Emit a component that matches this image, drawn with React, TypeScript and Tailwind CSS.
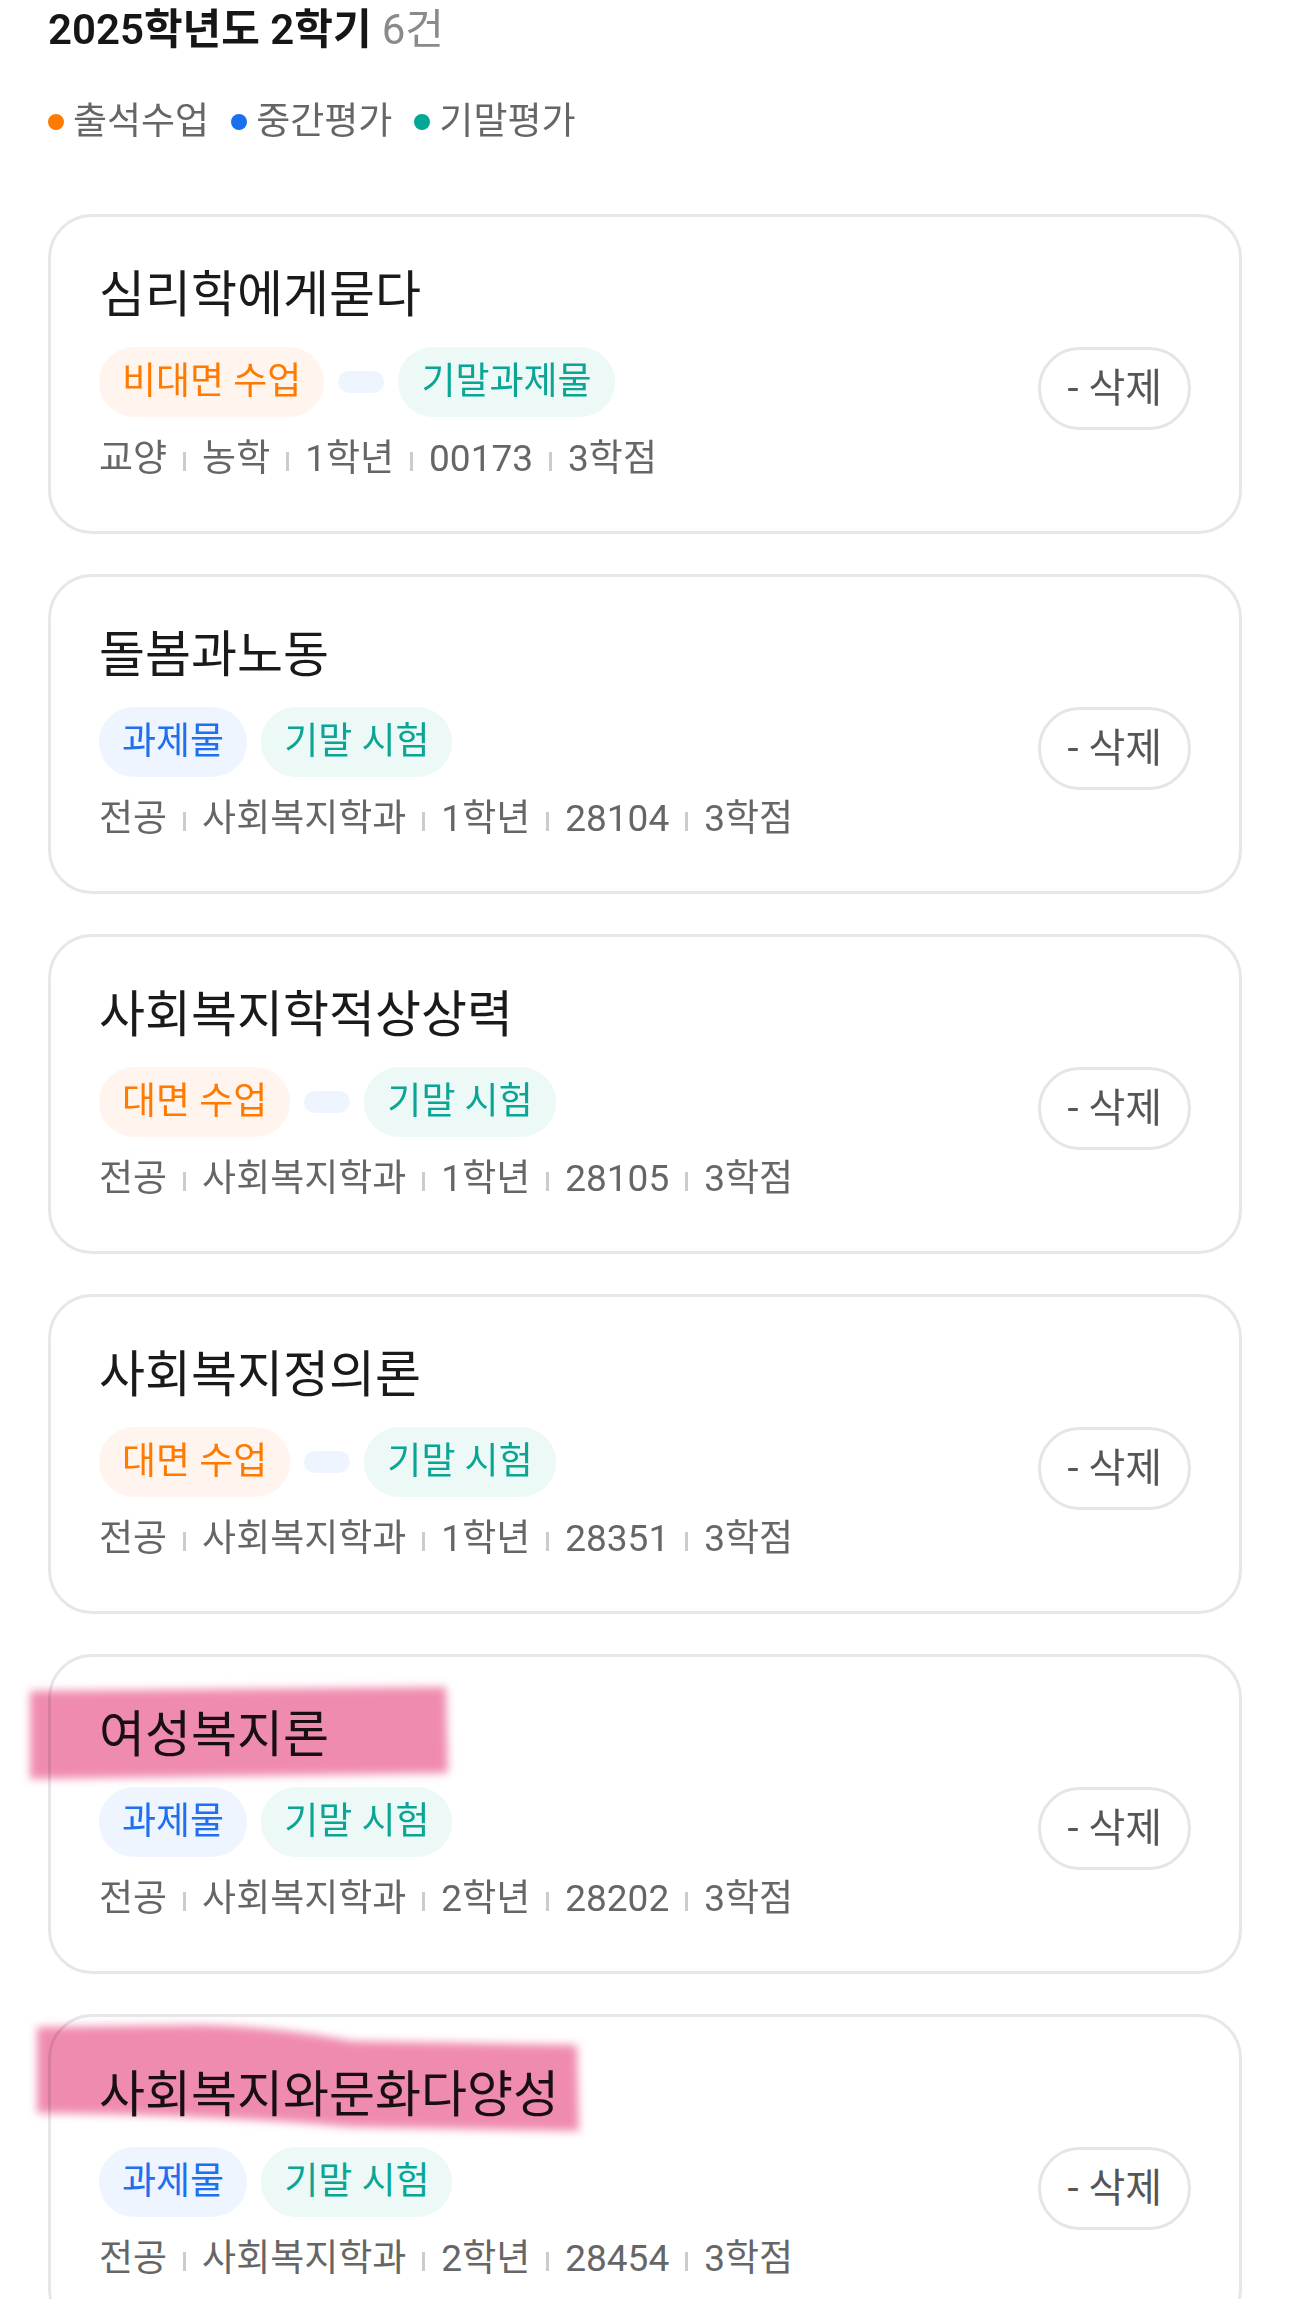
import React from 'react';

type TagKind = 'orange' | 'blue' | 'teal';

interface Tag {
  kind: TagKind;
  label: string;
}

interface Course {
  name: string;
  tags: Tag[];
  meta: string[];
  mark?: 'short' | 'long';
}

const tagStyles: Record<TagKind, string> = {
  orange: 'bg-[#fff5ee] text-[#ff7a00]',
  blue: 'bg-[#eff5ff] text-[#1f6fef]',
  teal: 'bg-[#edf9f6] text-[#0aa594]',
};

const courses: Course[] = [
  {
    name: '심리학에게묻다',
    tags: [
      { kind: 'orange', label: '비대면 수업' },
      { kind: 'blue', label: '' },
      { kind: 'teal', label: '기말과제물' },
    ],
    meta: ['교양', '농학', '1학년', '00173', '3학점'],
  },
  {
    name: '돌봄과노동',
    tags: [
      { kind: 'blue', label: '과제물' },
      { kind: 'teal', label: '기말 시험' },
    ],
    meta: ['전공', '사회복지학과', '1학년', '28104', '3학점'],
  },
  {
    name: '사회복지학적상상력',
    tags: [
      { kind: 'orange', label: '대면 수업' },
      { kind: 'blue', label: '' },
      { kind: 'teal', label: '기말 시험' },
    ],
    meta: ['전공', '사회복지학과', '1학년', '28105', '3학점'],
  },
  {
    name: '사회복지정의론',
    tags: [
      { kind: 'orange', label: '대면 수업' },
      { kind: 'blue', label: '' },
      { kind: 'teal', label: '기말 시험' },
    ],
    meta: ['전공', '사회복지학과', '1학년', '28351', '3학점'],
  },
  {
    name: '여성복지론',
    tags: [
      { kind: 'blue', label: '과제물' },
      { kind: 'teal', label: '기말 시험' },
    ],
    meta: ['전공', '사회복지학과', '2학년', '28202', '3학점'],
    mark: 'short',
  },
  {
    name: '사회복지와문화다양성',
    tags: [
      { kind: 'blue', label: '과제물' },
      { kind: 'teal', label: '기말 시험' },
    ],
    meta: ['전공', '사회복지학과', '2학년', '28454', '3학점'],
    mark: 'long',
  },
];

// pink marker strokes drawn over two titles
const Marker: React.FC<{ kind: 'short' | 'long' }> = ({ kind }) => {
  const d =
    kind === 'short'
      ? 'M14 20 L430 16 L432 102 L14 108 Z'
      : 'M16 12 L180 10 Q260 12 330 26 L556 30 L558 116 L330 112 Q200 100 16 98 Z';
  const w = kind === 'short' ? 450 : 576;
  return (
    <svg
      className={`pointer-events-none absolute mix-blend-multiply ${kind === 'short' ? 'left-[-35px] top-[14px]' : 'left-[-30px] top-[-2px]'}`}
      width={w}
      height={140}
      viewBox={`0 0 ${w} 140`}
    >
      <defs>
        <filter id={`blur-${kind}`} x="-10%" y="-20%" width="120%" height="140%">
          <feGaussianBlur stdDeviation="4" />
        </filter>
      </defs>
      <path d={d} fill="#f08bb0" filter={`url(#blur-${kind})`} />
    </svg>
  );
};

const CourseCard: React.FC<{ course: Course }> = ({ course }) => (
  <div className="relative flex items-start justify-between rounded-[44px] border-[3px] border-[#e6e7ea] bg-white px-[48px] py-[48px]">
    <div className="flex flex-col">
      <div className="text-[50px] leading-[60px] text-[#1a1a1a]">{course.name}</div>
      <div className="mt-[22px] flex h-[70px] items-center gap-[14px]">
        {course.tags.map((t, i) => (
          <span
            key={i}
            className={`rounded-full px-[23px] py-[11px] text-[37px] leading-[48px] ${tagStyles[t.kind]}`}
          >
            {t.label}
          </span>
        ))}
      </div>
      <div className="mt-[18px] text-[37px] leading-[48px] text-[#666666]">
        {course.meta.map((m, i) => (
          <React.Fragment key={i}>
            {i > 0 && <span className="mx-[16px] inline-block h-[19px] w-[3px] bg-[#cccccc]" />}
            {m}
          </React.Fragment>
        ))}
      </div>
    </div>
    <button className="mt-[82px] rounded-full border-[3px] border-[#e5e5e5] bg-white px-[26px] py-[13px] text-[40px] leading-[51px] text-[#555555]">
      - 삭제
    </button>
    {course.mark && <Marker kind={course.mark} />}
  </div>
);

const App: React.FC = () => {
  return (
    <div className="min-h-screen bg-white px-[48px] pb-[60px] font-['Roboto','Noto_Sans_CJK_KR',sans-serif]">
      <div className="flex items-baseline text-[42px] leading-[59px]">
        <span className="font-semibold text-[#161616]">2025학년도 2학기</span>
        <span className="ml-[10px] text-[#8a8a8a]">6건</span>
      </div>

      <div className="mt-[38px] flex items-center text-[37px] leading-[50px] text-[#666666]">
        <span className="mr-[9px] h-[16px] w-[16px] rounded-full bg-[#ff7a00]" />
        <span>출석수업</span>
        <span className="ml-[22px] mr-[9px] h-[16px] w-[16px] rounded-full bg-[#1a6ef0]" />
        <span>중간평가</span>
        <span className="ml-[22px] mr-[9px] h-[16px] w-[16px] rounded-full bg-[#00a896]" />
        <span>기말평가</span>
      </div>

      <div className="mt-[67px] flex flex-col gap-[40px]">
        {courses.map((c) => (
          <CourseCard key={c.name} course={c} />
        ))}
      </div>
    </div>
  );
};

export default App;
